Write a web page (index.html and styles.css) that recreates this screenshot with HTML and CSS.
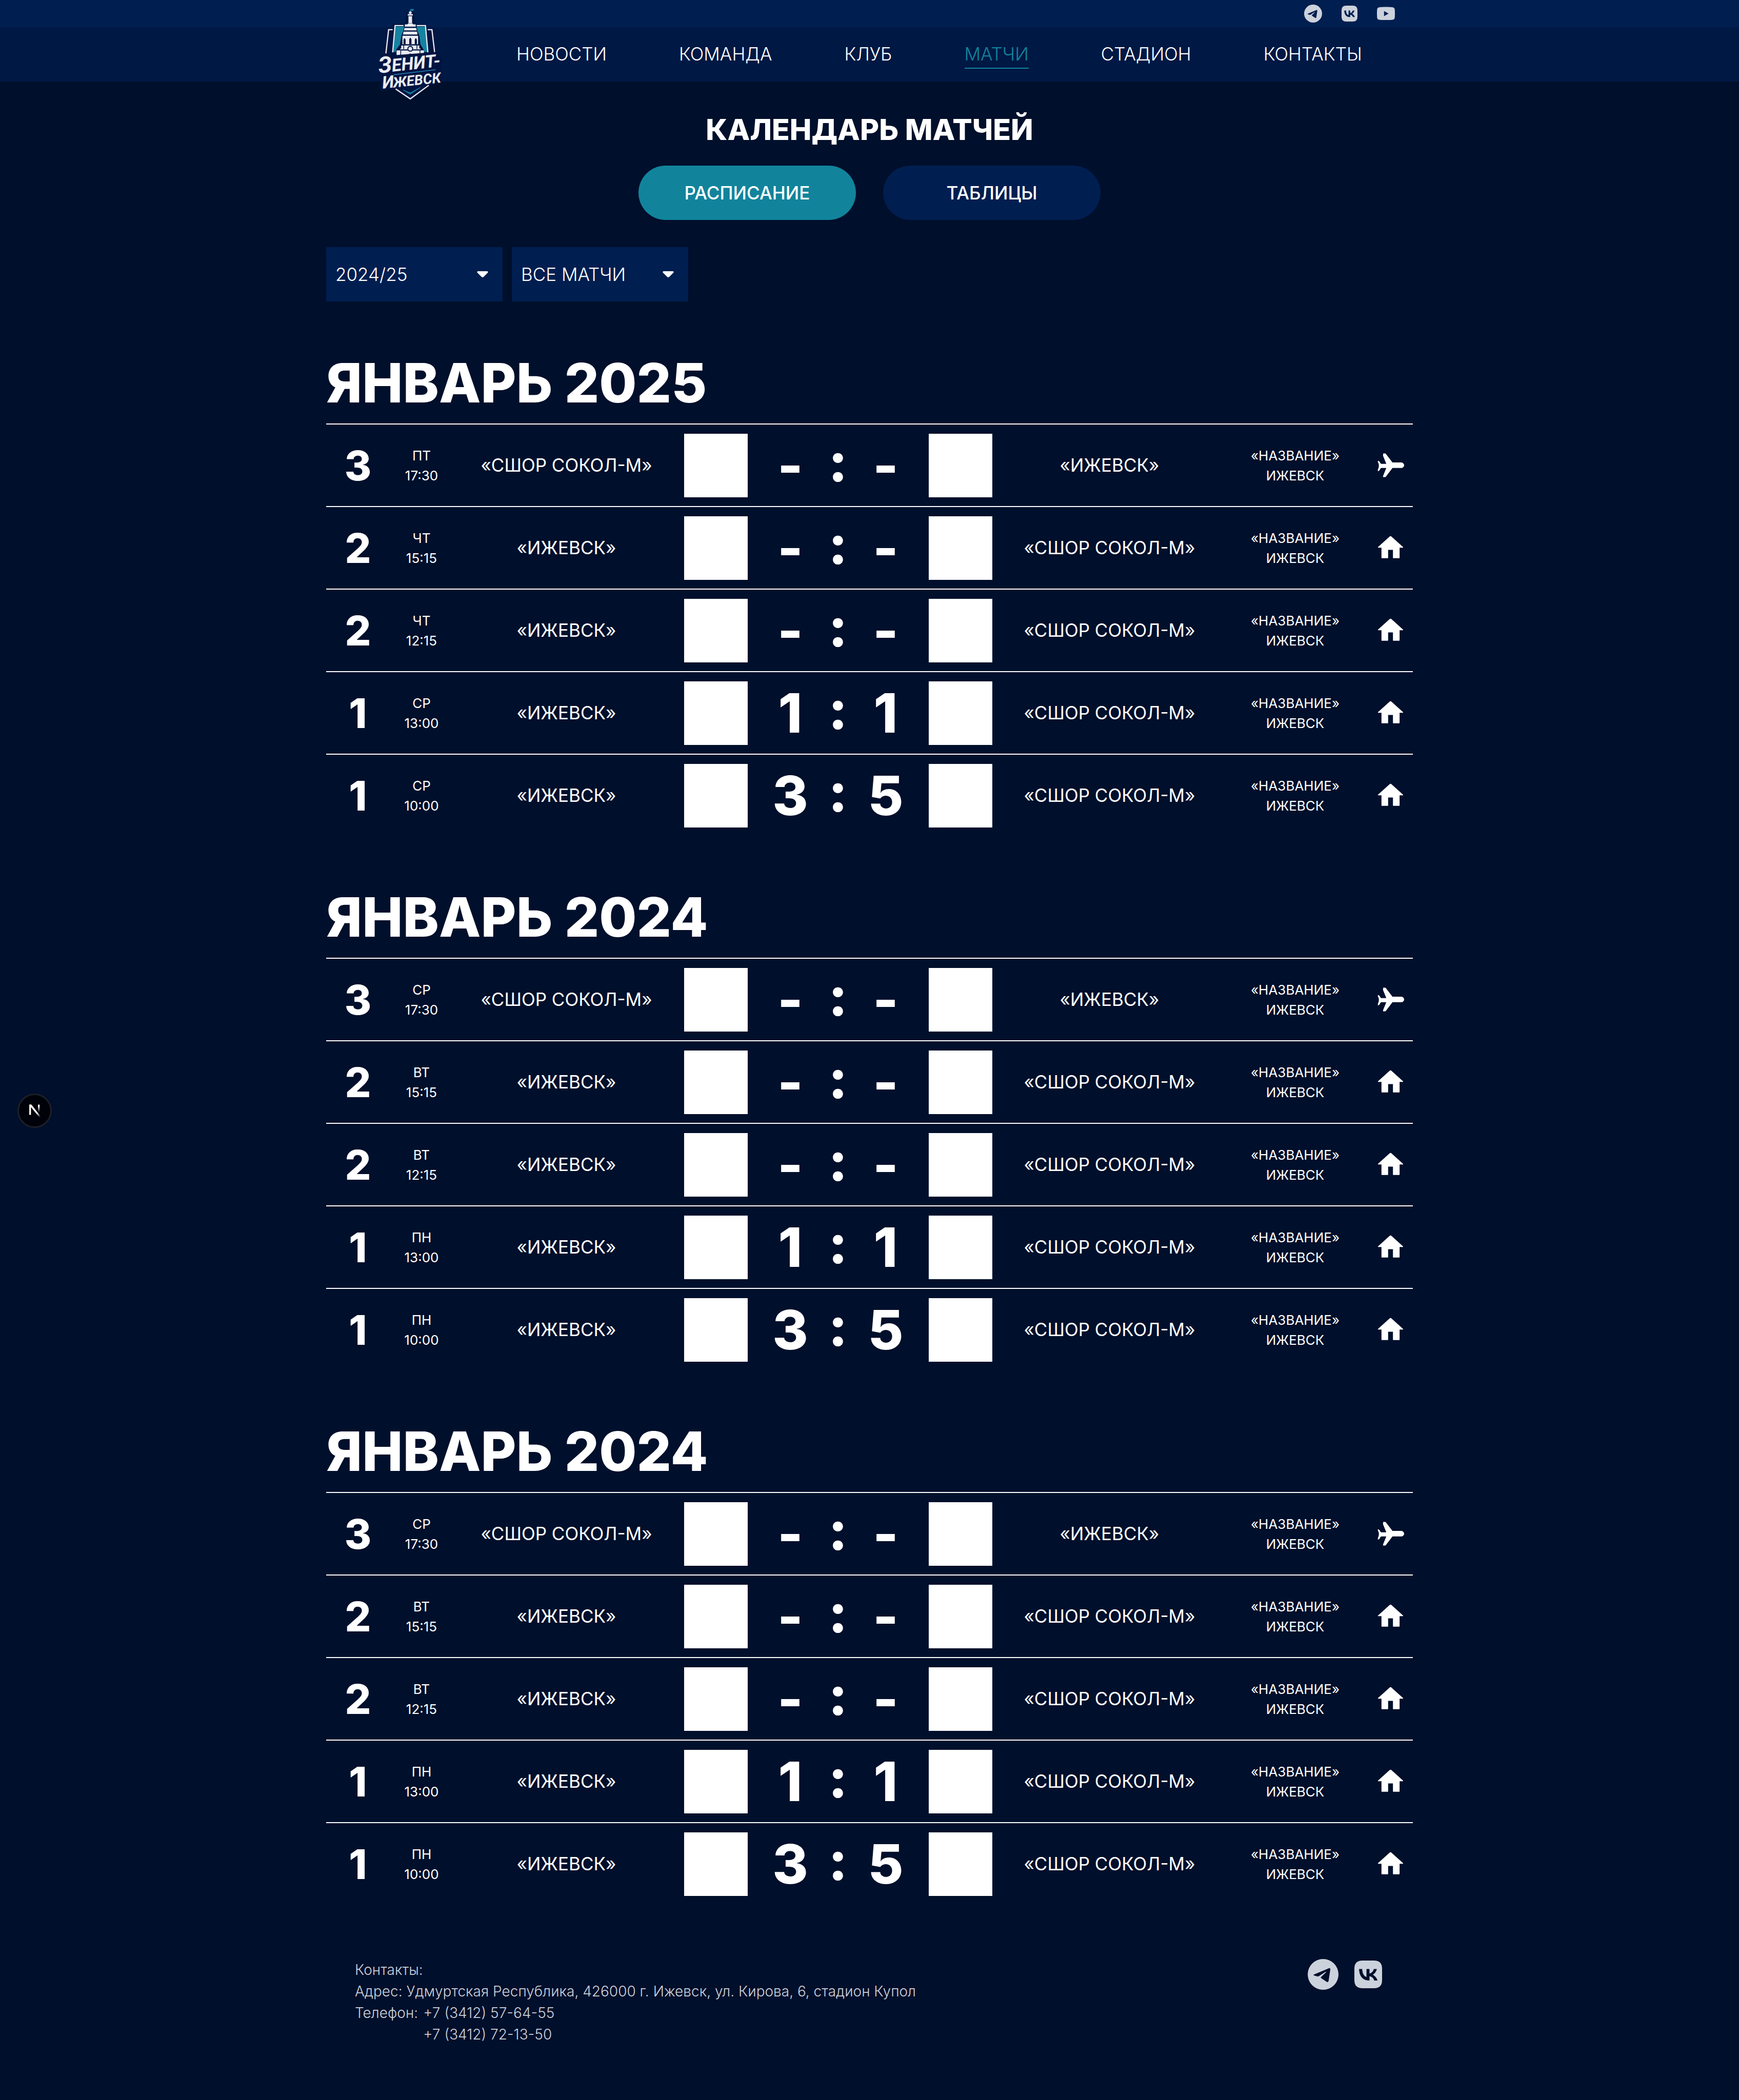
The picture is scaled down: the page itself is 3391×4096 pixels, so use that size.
FILE: index.html
```html
<!DOCTYPE html>
<html lang="ru">
<head>
<meta charset="utf-8">
<meta name="viewport" content="width=device-width, initial-scale=1">
<title>Календарь матчей</title>
<link rel="stylesheet" href="styles.css">
</head>
<body>
<svg class="sprite" aria-hidden="true">
  <symbol id="telegram" viewBox="81 81 204 204">
    <path fill-rule="evenodd" d="M183 81a102 102 0 1 1 0 204a102 102 0 1 1 0-204zM122 184q-5 3 0 6q14 5 26 7q4 0 8-3l42-27q8-3 4 2l-32 31q-5 5 0 8l38 25q8 4 11-5l12-78q0-10-9-8z"/>
  </symbol>
  <symbol id="vk" viewBox="0 0 24 24">
    <path fill-rule="evenodd" d="M7 0h10q7 0 7 7v10q0 7-7 7H7q-7 0-7-7V7q0-7 7-7zM6.790 7.300H4.050c.13 6.240 3.250 9.990 8.720 9.990h.31v-3.570c2.010.2 3.530 1.670 4.140 3.570h2.840c-.78-2.840-2.830-4.410-4.110-5.010c1.280-.74 3.080-2.540 3.510-4.980h-2.580c-.56 1.980-2.220 3.780-3.800 3.950V7.300H10.500v6.920c-1.600-.4-3.620-2.340-3.710-6.920z"/>
  </symbol>
  <symbol id="youtube" viewBox="603 33 114 114">
    <path fill-rule="evenodd" d="M660 48q32 0 43 2q12 2 13 14q2 25 0 51q-1 12-13 14q-11 2-43 2t-43-2q-12-2-13-14q-2-25 0-51q1-12 13-14q11-2 43-2zM648 74v32l29-16z"/>
  </symbol>
  <symbol id="away" viewBox="180 114 180 180">
    <path d="M221 126h16l46 59h62q8 1 15 14v10q-7 11-15 13h-62l-46 60h-16q-2-4 0-8l21-52h-34q-6 4-9 12q-4 9-13 9v-9q14-28 0-52v-8q9 0 13 9q3 9 9 12h34l-21-52q-3-5 0-7z"/>
  </symbol>
  <symbol id="home" viewBox="180 660 180 180">
    <path d="M266 674q4-3 8 0l79 71q2 4-2 4h-21v66q0 4-4 4h-36q-4 0-4-4v-51h-32v51q0 4-4 4h-36q-4 0-4-4v-66h-21q-5 0-2-4z"/>
  </symbol>
</svg>

<header class="header">
  <div class="topbar">
    <div class="container topbar-inner">
      <a href="#" aria-label="Telegram"><svg class="icon-small"><use href="#telegram"/></svg></a>
      <a href="#" aria-label="ВКонтакте"><svg class="icon-small icon-square"><use href="#vk"/></svg></a>
      <a href="#" aria-label="YouTube"><svg class="icon-small"><use href="#youtube"/></svg></a>
    </div>
  </div>
  <div class="navbar">
    <div class="container navbar-inner">
      <a class="logo" href="#" aria-label="Зенит-Ижевск">
        <svg class="logo-image" viewBox="95 40 450 635">
          <path fill="#001441" d="M205 155h80l10-75h50l10 75h68l12 28h38l22 175l34 20v35l-8 60l4 65l-85 30l-120 100l-110-80l-88 14l14-110l-30-10l20-120h20l14-170h40z"/>
          <path fill="#1583a0" d="M221 174h60l-8 30l-12 32l-10 60l-24 30l-4 18h-17zM362 174h56l18 170h-22l-4-14l-22-36l-8-60l-12-30z"/>
          <g fill="none" stroke="#e9ebf2" stroke-width="8">
            <path d="M275 168h-56l-16 178M363 168h58l16 178M203 195h-27l-18 158M436 195h28l18 150"/>
          </g>
          <path fill="#1583a0" d="M318 60l24-3v12l-22 2z"/>
          <circle cx="320" cy="82" r="9" fill="#e9ebf2"/>
          <g fill="#e9ebf2">
            <path d="M303 92h34v9h-34zM308 105h24v47h-24zM284 160h16l6-6h28l6 6h16v15h-72zM282 184h77l4 16h-85zM275 208h90l3 19h-96zM268 236h104v56h-104zM260 300h120v24H260zM229 333h182v40H229zM254 320h134v42H254z"/>
          </g>
          <g fill="#001441">
            <path d="M275 292v-30q7-20 14 0v30zM313 292v-32q7-22 15 0v32zM350 292v-30q7-20 14 0v30zM274 298h5v26h-5zM362 298h5v26h-5zM254 326h134v8H254zM254 334h5v40h-5zM382 334h5v30h-5zM310 362q9-18 20 0z"/>
          </g>
          <circle cx="320" cy="322" r="16" fill="#e9ebf2" stroke="#001441" stroke-width="7"/>
          <path fill="#001441" d="M130 372l375-30v60l-20 160l-360 38z"/>
          <g class="logo-text" transform="rotate(-6 200 480)">
            <text x="112" y="476" font-size="150">З</text>
            <text x="201" y="474" font-size="118">ЕНИТ-</text>
            <text x="127" y="580" font-size="114">И</text>
            <text x="198" y="580" font-size="94">ЖЕВСК</text>
          </g>
          <path d="M210 495l280-34" stroke="#2a8fc0" stroke-width="5"/>
          <path d="M223 589l97 66l123-90" fill="none" stroke="#e9ebf2" stroke-width="8"/>
          <path d="M272 596l48 29l68-46l-68 36z" fill="#1583a0" stroke="#1583a0" stroke-width="3"/>
        </svg>
      </a>
      <nav class="menu">
        <a class="menu-link" href="#">НОВОСТИ</a>
        <a class="menu-link" href="#">КОМАНДА</a>
        <a class="menu-link" href="#">КЛУБ</a>
        <a class="menu-link menu-link-active" href="#" aria-current="page">МАТЧИ</a>
        <a class="menu-link" href="#">СТАДИОН</a>
        <a class="menu-link" href="#">КОНТАКТЫ</a>
      </nav>
    </div>
  </div>
</header>

<main class="container main">
  <div class="intro">
    <h1 class="title">КАЛЕНДАРЬ МАТЧЕЙ</h1>
    <div class="tabs">
      <button class="tab tab-active" type="button">РАСПИСАНИЕ</button>
      <button class="tab" type="button">ТАБЛИЦЫ</button>
    </div>
    <div class="filters">
      <div class="filter">
        <select class="filter-select" aria-label="Сезон"><option>2024/25</option></select>
        <svg class="filter-caret" viewBox="0 0 22 12"><path d="M2 0h18q3 1 1 3l-8 8q-2 2-4 0L1 3q-2-2 1-3z"/></svg>
      </div>
      <div class="filter">
        <select class="filter-select" aria-label="Матчи"><option>ВСЕ МАТЧИ</option></select>
        <svg class="filter-caret" viewBox="0 0 22 12"><path d="M2 0h18q3 1 1 3l-8 8q-2 2-4 0L1 3q-2-2 1-3z"/></svg>
      </div>
    </div>
  </div>

  <div class="months">
  <section class="month">
    <h2 class="month-title">ЯНВАРЬ 2025</h2>
    <table class="matches">
      <colgroup><col class="col-day"><col class="col-time"><col class="col-team"><col class="col-score"><col class="col-team"><col class="col-venue"><col class="col-side"></colgroup>
      <tbody>
        <tr><td class="day">3</td><td class="small">ПТ<br>17:30</td><td>«СШОР СОКОЛ-М»</td><td><div class="score"><span class="crest"></span><b>-</b><b class="colon">:</b><b>-</b><span class="crest"></span></div></td><td>«ИЖЕВСК»</td><td class="small">«НАЗВАНИЕ»<br>ИЖЕВСК</td><td><svg class="side"><use href="#away"/></svg></td></tr>
        <tr><td class="day">2</td><td class="small">ЧТ<br>15:15</td><td>«ИЖЕВСК»</td><td><div class="score"><span class="crest"></span><b>-</b><b class="colon">:</b><b>-</b><span class="crest"></span></div></td><td>«СШОР СОКОЛ-М»</td><td class="small">«НАЗВАНИЕ»<br>ИЖЕВСК</td><td><svg class="side"><use href="#home"/></svg></td></tr>
        <tr><td class="day">2</td><td class="small">ЧТ<br>12:15</td><td>«ИЖЕВСК»</td><td><div class="score"><span class="crest"></span><b>-</b><b class="colon">:</b><b>-</b><span class="crest"></span></div></td><td>«СШОР СОКОЛ-М»</td><td class="small">«НАЗВАНИЕ»<br>ИЖЕВСК</td><td><svg class="side"><use href="#home"/></svg></td></tr>
        <tr><td class="day">1</td><td class="small">СР<br>13:00</td><td>«ИЖЕВСК»</td><td><div class="score"><span class="crest"></span><b>1</b><b class="colon">:</b><b>1</b><span class="crest"></span></div></td><td>«СШОР СОКОЛ-М»</td><td class="small">«НАЗВАНИЕ»<br>ИЖЕВСК</td><td><svg class="side"><use href="#home"/></svg></td></tr>
        <tr><td class="day">1</td><td class="small">СР<br>10:00</td><td>«ИЖЕВСК»</td><td><div class="score"><span class="crest"></span><b>3</b><b class="colon">:</b><b>5</b><span class="crest"></span></div></td><td>«СШОР СОКОЛ-М»</td><td class="small">«НАЗВАНИЕ»<br>ИЖЕВСК</td><td><svg class="side"><use href="#home"/></svg></td></tr>
      </tbody>
    </table>
  </section>

  <section class="month">
    <h2 class="month-title">ЯНВАРЬ 2024</h2>
    <table class="matches">
      <colgroup><col class="col-day"><col class="col-time"><col class="col-team"><col class="col-score"><col class="col-team"><col class="col-venue"><col class="col-side"></colgroup>
      <tbody>
        <tr><td class="day">3</td><td class="small">СР<br>17:30</td><td>«СШОР СОКОЛ-М»</td><td><div class="score"><span class="crest"></span><b>-</b><b class="colon">:</b><b>-</b><span class="crest"></span></div></td><td>«ИЖЕВСК»</td><td class="small">«НАЗВАНИЕ»<br>ИЖЕВСК</td><td><svg class="side"><use href="#away"/></svg></td></tr>
        <tr><td class="day">2</td><td class="small">ВТ<br>15:15</td><td>«ИЖЕВСК»</td><td><div class="score"><span class="crest"></span><b>-</b><b class="colon">:</b><b>-</b><span class="crest"></span></div></td><td>«СШОР СОКОЛ-М»</td><td class="small">«НАЗВАНИЕ»<br>ИЖЕВСК</td><td><svg class="side"><use href="#home"/></svg></td></tr>
        <tr><td class="day">2</td><td class="small">ВТ<br>12:15</td><td>«ИЖЕВСК»</td><td><div class="score"><span class="crest"></span><b>-</b><b class="colon">:</b><b>-</b><span class="crest"></span></div></td><td>«СШОР СОКОЛ-М»</td><td class="small">«НАЗВАНИЕ»<br>ИЖЕВСК</td><td><svg class="side"><use href="#home"/></svg></td></tr>
        <tr><td class="day">1</td><td class="small">ПН<br>13:00</td><td>«ИЖЕВСК»</td><td><div class="score"><span class="crest"></span><b>1</b><b class="colon">:</b><b>1</b><span class="crest"></span></div></td><td>«СШОР СОКОЛ-М»</td><td class="small">«НАЗВАНИЕ»<br>ИЖЕВСК</td><td><svg class="side"><use href="#home"/></svg></td></tr>
        <tr><td class="day">1</td><td class="small">ПН<br>10:00</td><td>«ИЖЕВСК»</td><td><div class="score"><span class="crest"></span><b>3</b><b class="colon">:</b><b>5</b><span class="crest"></span></div></td><td>«СШОР СОКОЛ-М»</td><td class="small">«НАЗВАНИЕ»<br>ИЖЕВСК</td><td><svg class="side"><use href="#home"/></svg></td></tr>
      </tbody>
    </table>
  </section>

  <section class="month">
    <h2 class="month-title">ЯНВАРЬ 2024</h2>
    <table class="matches">
      <colgroup><col class="col-day"><col class="col-time"><col class="col-team"><col class="col-score"><col class="col-team"><col class="col-venue"><col class="col-side"></colgroup>
      <tbody>
        <tr><td class="day">3</td><td class="small">СР<br>17:30</td><td>«СШОР СОКОЛ-М»</td><td><div class="score"><span class="crest"></span><b>-</b><b class="colon">:</b><b>-</b><span class="crest"></span></div></td><td>«ИЖЕВСК»</td><td class="small">«НАЗВАНИЕ»<br>ИЖЕВСК</td><td><svg class="side"><use href="#away"/></svg></td></tr>
        <tr><td class="day">2</td><td class="small">ВТ<br>15:15</td><td>«ИЖЕВСК»</td><td><div class="score"><span class="crest"></span><b>-</b><b class="colon">:</b><b>-</b><span class="crest"></span></div></td><td>«СШОР СОКОЛ-М»</td><td class="small">«НАЗВАНИЕ»<br>ИЖЕВСК</td><td><svg class="side"><use href="#home"/></svg></td></tr>
        <tr><td class="day">2</td><td class="small">ВТ<br>12:15</td><td>«ИЖЕВСК»</td><td><div class="score"><span class="crest"></span><b>-</b><b class="colon">:</b><b>-</b><span class="crest"></span></div></td><td>«СШОР СОКОЛ-М»</td><td class="small">«НАЗВАНИЕ»<br>ИЖЕВСК</td><td><svg class="side"><use href="#home"/></svg></td></tr>
        <tr><td class="day">1</td><td class="small">ПН<br>13:00</td><td>«ИЖЕВСК»</td><td><div class="score"><span class="crest"></span><b>1</b><b class="colon">:</b><b>1</b><span class="crest"></span></div></td><td>«СШОР СОКОЛ-М»</td><td class="small">«НАЗВАНИЕ»<br>ИЖЕВСК</td><td><svg class="side"><use href="#home"/></svg></td></tr>
        <tr><td class="day">1</td><td class="small">ПН<br>10:00</td><td>«ИЖЕВСК»</td><td><div class="score"><span class="crest"></span><b>3</b><b class="colon">:</b><b>5</b><span class="crest"></span></div></td><td>«СШОР СОКОЛ-М»</td><td class="small">«НАЗВАНИЕ»<br>ИЖЕВСК</td><td><svg class="side"><use href="#home"/></svg></td></tr>
      </tbody>
    </table>
  </section>
  </div>
</main>

<footer class="container footer">
  <address class="contacts">
    <div>Контакты:</div>
    <div>Адрес: Удмуртская Республика, 426000 г. Ижевск, ул. Кирова, 6, стадион Купол</div>
    <div class="phones">
      <span>Телефон:</span>
      <div class="phone-list">
        <a href="tel:+73412576455">+7 (3412) 57-64-55</a>
        <a href="tel:+73412721350">+7 (3412) 72-13-50</a>
      </div>
    </div>
  </address>
  <div class="socials">
    <a href="#" aria-label="Telegram"><svg class="icon-large"><use href="#telegram"/></svg></a>
    <a href="#" aria-label="ВКонтакте"><svg class="icon-large icon-square"><use href="#vk"/></svg></a>
  </div>
</footer>

<button class="devtools" type="button" aria-label="Инструменты разработчика">
  <svg class="devtools-icon" viewBox="185 184 84 90">
    <defs>
      <linearGradient id="fade-bar" x1="0" y1="189" x2="0" y2="238" gradientUnits="userSpaceOnUse"><stop offset="0.2" stop-color="#fff"/><stop offset="1" stop-color="#fff" stop-opacity="0"/></linearGradient>
      <linearGradient id="fade-leg" x1="236" y1="236" x2="262" y2="272" gradientUnits="userSpaceOnUse"><stop offset="0.2" stop-color="#fff"/><stop offset="1" stop-color="#fff" stop-opacity="0"/></linearGradient>
    </defs>
    <path fill="#fff" d="M192 189h11v67h-11z"/>
    <path fill="url(#fade-leg)" d="M192 189h14l60 76l-9 6l-65-80z"/>
    <path fill="url(#fade-bar)" d="M249 189h11v49h-11z"/>
  </svg>
</button>
</body>
</html>
```
FILE: styles.css
```css
:root {
  --page: #000f2b;
  --panel: #001e50;
  --navbar: #001844;
  --accent: #11849c;
  --muted: #ccd2dc;
}

* {
  box-sizing: border-box;
}

body {
  margin: 0;
  position: relative;
  background: var(--page);
  color: #fff;
  font-family: Inter, "Liberation Sans", sans-serif;
  font-size: 35px;
  line-height: 53px;
}

a {
  color: inherit;
  text-decoration: none;
}

svg {
  display: block;
}

.sprite {
  position: absolute;
  width: 0;
  height: 0;
}

.container {
  width: 100%;
  max-width: 2119px;
  margin: 0 auto;
}

/* Header */

.topbar {
  background: var(--panel);
}

.topbar-inner {
  display: flex;
  justify-content: flex-end;
  align-items: center;
  gap: 36px;
  height: 53px;
  padding-right: 35px;
}

.icon-small {
  width: 35px;
  height: 35px;
  fill: var(--muted);
}

.icon-small.icon-square {
  padding: 2px;
}

.navbar {
  background: var(--navbar);
}

.navbar-inner {
  position: relative;
  display: flex;
  align-items: center;
  height: 106px;
  padding-left: 371px;
}

.logo {
  position: absolute;
  left: 98px;
  bottom: -40px;
}

.logo-image {
  width: 132px;
  height: 187px;
  overflow: visible;
}

.logo-text {
  fill: #e9ebf2;
  font-family: Roboto, sans-serif;
  font-weight: 700;
  font-style: italic;
}

.menu {
  display: flex;
  gap: 141px;
  font-weight: 300;
}

.menu-link {
  border-bottom: 2px solid transparent;
}

.menu-link-active {
  color: var(--accent);
  border-color: var(--accent);
}

/* Page intro */

.main {
  display: flex;
  flex-direction: column;
  gap: 79px;
  padding-top: 51px;
}

.title {
  margin: 0 0 27px;
  font-size: 57px;
  line-height: 86px;
  font-weight: 800;
  text-align: center;
}

.tabs {
  display: flex;
  justify-content: center;
  gap: 53px;
  margin-bottom: 53px;
}

.tab {
  width: 424px;
  height: 106px;
  border: 0;
  border-radius: 53px;
  background: var(--panel);
  color: #fff;
  font: inherit;
  font-weight: 500;
}

.tab-active {
  background: var(--accent);
}

.filters {
  display: flex;
  gap: 18px;
}

.filter {
  position: relative;
  width: 344px;
}

.filter-select {
  display: block;
  width: 100%;
  height: 106px;
  padding: 0 18px;
  border: 0;
  border-radius: 0;
  appearance: none;
  background: var(--panel);
  color: #fff;
  font: inherit;
  font-weight: 300;
}

.filter-caret {
  position: absolute;
  right: 28px;
  top: 47px;
  width: 22px;
  height: 12px;
  fill: #fff;
  pointer-events: none;
}

/* Matches */

.months {
  display: flex;
  flex-direction: column;
  gap: 78px;
}

.month-title {
  margin: 0;
  font-size: 106px;
  line-height: 159px;
  font-weight: 800;
}

.matches {
  width: 100%;
  table-layout: fixed;
  border-spacing: 0;
}

.col-day,
.col-time {
  width: 124px;
}

.col-team {
  width: 441px;
}

.col-score {
  width: 618px;
}

.col-venue {
  width: 283px;
}

.col-side {
  width: 88px;
}

.matches td {
  height: 161px;
  padding: 0;
  border-top: 2px solid #fff;
  text-align: center;
  vertical-align: middle;
}

.matches .day {
  font-size: 80px;
  font-weight: 800;
}

.matches .small {
  font-size: 26px;
  line-height: 39px;
}

.score {
  display: grid;
  grid-template-columns: 161px 93px 93px 93px 161px;
  justify-content: center;
  align-items: center;
  font-size: 106px;
  line-height: 124px;
}

.score b {
  font-weight: 800;
}

.score .colon {
  height: 124px;
  line-height: 110px;
}

.crest {
  width: 124px;
  height: 124px;
  background: #fff;
}

.crest:last-child {
  justify-self: end;
}

.side {
  width: 53px;
  height: 53px;
  margin: 0 auto;
  fill: #fff;
}

/* Footer */

.footer {
  display: flex;
  justify-content: space-between;
  align-items: flex-start;
  padding: 106px 53px 99px 56px;
  color: var(--muted);
}

.contacts {
  font-size: 28px;
  line-height: 42px;
  font-style: normal;
  font-weight: 300;
}

.phones {
  display: flex;
  gap: 10px;
}

.phone-list {
  display: flex;
  flex-direction: column;
}

.socials {
  display: flex;
  gap: 28px;
  padding-right: 4px;
}

.icon-large {
  width: 60px;
  height: 60px;
  fill: var(--muted);
}

.icon-large.icon-square {
  padding: 3px;
}

/* Developer tools badge floating over the page */

.devtools {
  position: absolute;
  left: 34px;
  top: 2133px;
  display: flex;
  align-items: center;
  justify-content: center;
  width: 67px;
  height: 67px;
  padding: 0;
  border: 3px solid #1c1f26;
  border-radius: 50%;
  background: #00020a;
}

.devtools-icon {
  width: 25px;
  height: 27px;
}
```
